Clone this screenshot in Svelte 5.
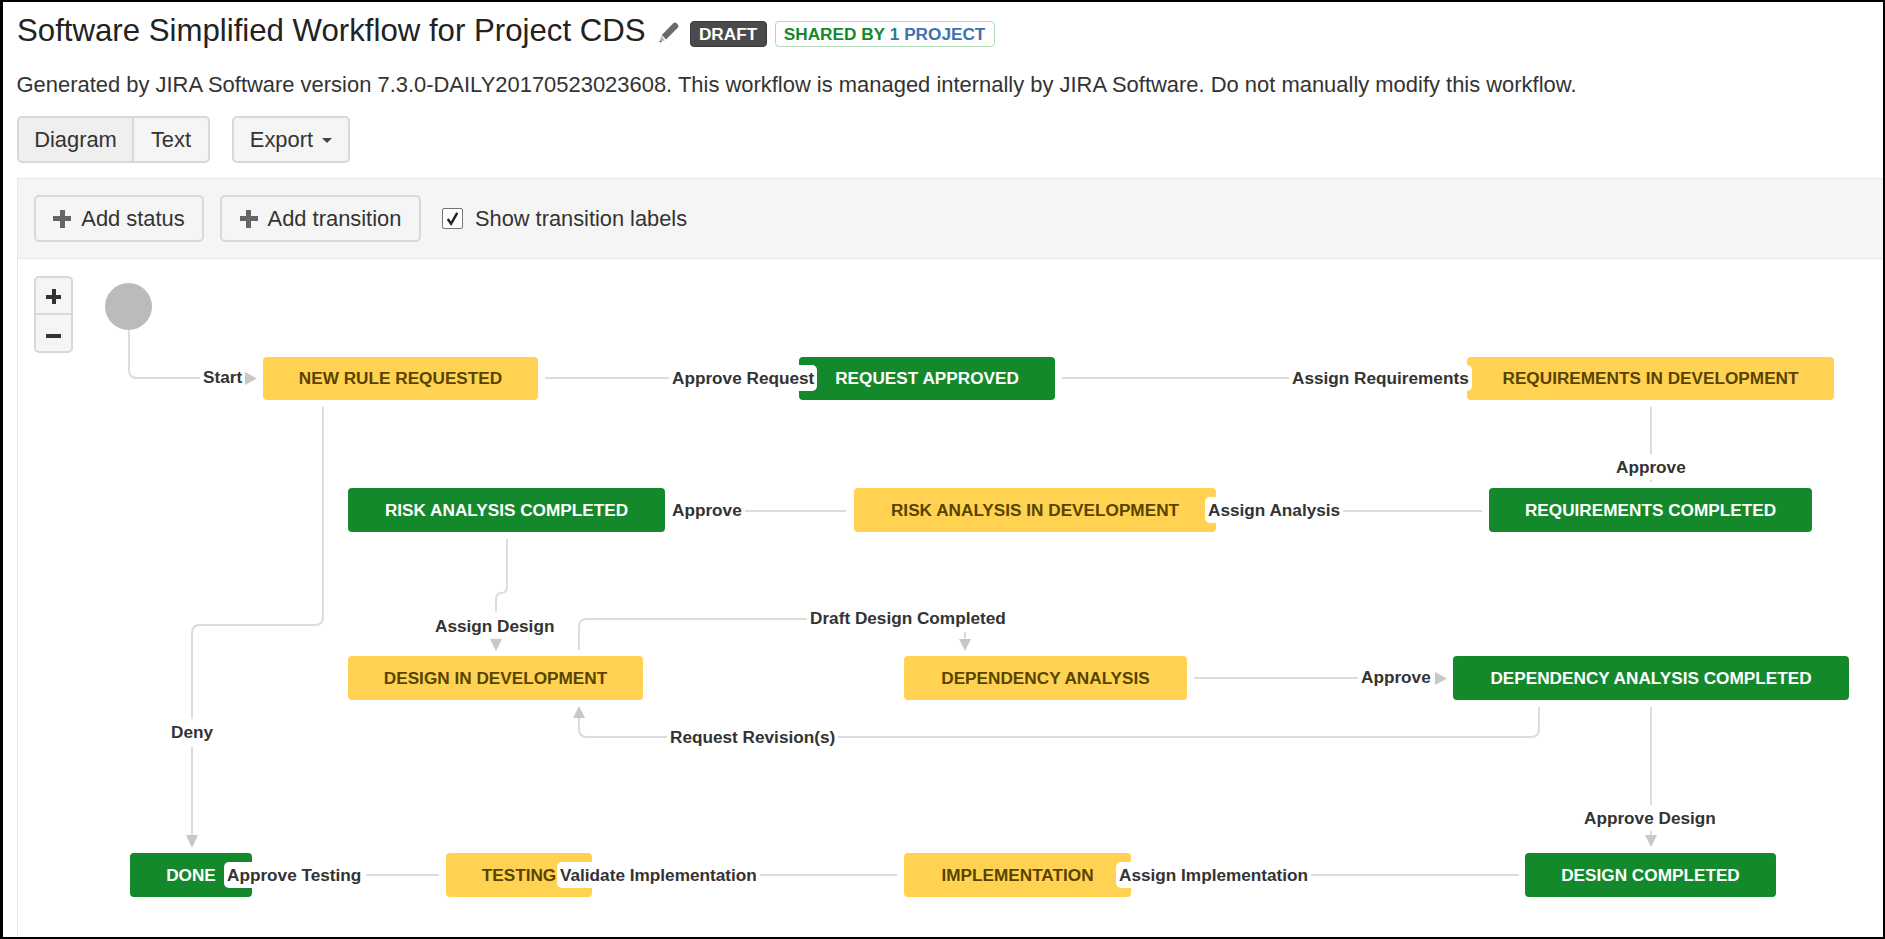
<script>
  // canvas origin in page coordinates, diagram data below is written in page coordinates
  const ox = 18;
  const oy = 259;

  const nodes = [
    { name: 'NEW RULE REQUESTED', x: 263, y: 357, w: 275, h: 43 },
    { name: 'REQUEST APPROVED', x: 799, y: 357, w: 256, h: 43, done: true },
    { name: 'REQUIREMENTS IN DEVELOPMENT', x: 1467, y: 357, w: 367, h: 43 },
    { name: 'RISK ANALYSIS COMPLETED', x: 348, y: 488, w: 317, h: 44, done: true },
    { name: 'RISK ANALYSIS IN DEVELOPMENT', x: 854, y: 488, w: 362, h: 44 },
    { name: 'REQUIREMENTS COMPLETED', x: 1489, y: 488, w: 323, h: 44, done: true },
    { name: 'DESIGN IN DEVELOPMENT', x: 348, y: 656, w: 295, h: 44 },
    { name: 'DEPENDENCY ANALYSIS', x: 904, y: 656, w: 283, h: 44 },
    { name: 'DEPENDENCY ANALYSIS COMPLETED', x: 1453, y: 656, w: 396, h: 44, done: true },
    { name: 'DONE', x: 130, y: 853, w: 122, h: 44, done: true },
    { name: 'TESTING', x: 446, y: 853, w: 146, h: 44 },
    { name: 'IMPLEMENTATION', x: 904, y: 853, w: 227, h: 44 },
    { name: 'DESIGN COMPLETED', x: 1525, y: 853, w: 251, h: 44, done: true }
  ];

  // x is where the text starts, cy its vertical middle
  const labels = [
    { text: 'Start', x: 203, cy: 377 },
    { text: 'Approve Request', x: 672, cy: 378 },
    { text: 'Assign Requirements', x: 1292, cy: 378 },
    { text: 'Approve', x: 1616, cy: 467 },
    { text: 'Approve', x: 672, cy: 510 },
    { text: 'Assign Analysis', x: 1208, cy: 510 },
    { text: 'Assign Design', x: 435, cy: 626 },
    { text: 'Draft Design Completed', x: 810, cy: 618 },
    { text: 'Request Revision(s)', x: 670, cy: 737 },
    { text: 'Approve', x: 1361, cy: 677 },
    { text: 'Approve Design', x: 1584, cy: 818 },
    { text: 'Deny', x: 171, cy: 732 },
    { text: 'Approve Testing', x: 227, cy: 875 },
    { text: 'Validate Implementation', x: 560, cy: 875 },
    { text: 'Assign Implementation', x: 1119, cy: 875 }
  ];

  const edges = [
    'M129 330V370Q129 378 137 378H203',
    'M545 378H672',
    'M1062 378H1292',
    'M1651 407V454',
    'M1651 480V482',
    'M741 511H846',
    'M1339 511H1482',
    'M507 539V586Q507 593 501 593Q496 593 496 600V612',
    'M579 650V627Q579 619 587 619H810',
    'M965 632V640',
    'M579 716V729Q579 737 587 737H670',
    'M835 737H1531Q1539 737 1539 729V707',
    'M1194 678H1361',
    'M1651 707V805',
    'M1651 826V836',
    'M1311 875H1519',
    'M760 875H897',
    'M366 875H439',
    'M323 407V617Q323 625 315 625H200Q192 625 192 633V719',
    'M192 747V836'
  ];

  const arrows = [
    '245,372 257,378.5 245,385',
    '1435,672 1447,678.5 1435,685',
    '490,639 502,639 496,651',
    '959,639 971,639 965,651',
    '1645,835 1657,835 1651,847',
    '186,835 198,835 192,848',
    '573,718 585,718 579,706'
  ];
</script>

<div class="page">
  <header class="title-row">
    <h1>Software Simplified Workflow for Project CDS</h1>
    <svg class="pencil" viewBox="0 0 20 21" width="20" height="21">
      <path d="M14.5 1 Q16 0 17.5 1.2 L19 2.8 Q20 4.2 19 5.5 L7 17.5 L2.8 13 Z" fill="#6a6a6a" />
      <path d="M2.2 14 L6 18.2 L0.5 20.5 Z" fill="#b5b5b5" />
      <path d="M0.5 20.5 L1 18.4 L2.6 19.8 Z" fill="#333" />
    </svg>
    <span class="badge draft">DRAFT</span>
    <span class="badge shared"><b class="green">SHARED BY</b> <b class="one">1</b> <b class="blue">PROJECT</b></span>
  </header>

  <p class="desc">Generated by JIRA Software version 7.3.0-DAILY20170523023608. This workflow is managed internally by JIRA Software. Do not manually modify this workflow.</p>

  <div class="view-row">
    <div class="btn-group">
      <button class="btn active">Diagram</button>
      <button class="btn">Text</button>
    </div>
    <button class="btn export">Export <i class="caret"></i></button>
  </div>

  <div class="panel">
    <div class="toolbar">
      <button class="btn add"><span class="plus"></span>Add status</button>
      <button class="btn add"><span class="plus"></span>Add transition</button>
      <label class="show">
        <span class="check">
          <svg viewBox="0 0 20 20" width="20" height="20"><path d="M5 10 L8.5 15 L15 3.5" fill="none" stroke="#222" stroke-width="2.6" /></svg>
        </span>
        Show transition labels
      </label>
    </div>

    <div class="canvas">
      <svg class="edges" viewBox="{ox} {oy} 1865 678" width="1865" height="678">
        {#each edges as d}
          <path {d} />
        {/each}
        {#each arrows as points}
          <polygon {points} />
        {/each}
      </svg>

      <div class="zoom">
        <span class="plus dark"></span>
        <span class="minus"></span>
      </div>
      <div class="start"></div>

      {#each nodes as n}
        <div class="node" class:done={n.done} style="left: {n.x - ox}px; top: {n.y - oy}px; width: {n.w}px; height: {n.h}px">{n.name}</div>
      {/each}

      {#each labels as l}
        <div class="label" style="left: {l.x - 3 - ox}px; top: {l.cy - 13 - oy}px">{l.text}</div>
      {/each}
    </div>
  </div>
</div>

<style>
  :global(body) {
    margin: 0;
    background: #fff;
  }

  .page {
    box-sizing: border-box;
    width: 1885px;
    height: 939px;
    border: 2px solid #000;
    border-left-width: 3px;
    overflow: hidden;
    font-family: "Liberation Sans", Arial, sans-serif;
    color: #333;
  }

  .title-row {
    display: flex;
    align-items: center;
    height: 45px;
    padding-left: 14px;
    padding-top: 13px;
    box-sizing: border-box;
  }

  h1 {
    margin: 0;
    font-size: 31.2px;
    font-weight: 400;
    color: #222;
    white-space: nowrap;
  }

  .pencil {
    margin-top: 3px;
    margin-left: 13px;
    margin-right: 11px;
  }

  .badge {
    box-sizing: border-box;
    height: 26px;
    margin-top: 6px;
    line-height: 26px;
    border-radius: 4px;
    font-size: 17.2px;
    font-weight: 700;
    text-align: center;
    white-space: nowrap;
  }

  .draft {
    width: 77px;
    background: #4a4a4a;
    border: 1px solid #3a3a3a;
    line-height: 24px;
    color: #fff;
  }

  .shared {
    width: 220px;
    margin-left: 8px;
    line-height: 24px;
    background: #fff;
    border: 1px solid #b2d8b9;
  }

  .green { color: #14892c; }
  .one { color: #2c7d8f; }
  .blue { color: #3b73af; }

  .desc {
    margin: 0;
    padding: 28px 0 0 13.5px;
    font-size: 21.94px;
    line-height: 20px;
    color: #333;
    white-space: nowrap;
  }

  .view-row {
    display: flex;
    gap: 22px;
    padding: 21px 0 0 14px;
    height: 47px;
  }

  .btn-group {
    display: flex;
  }

  .btn {
    box-sizing: border-box;
    height: 47px;
    padding: 0;
    font: 400 21.9px "Liberation Sans", Arial, sans-serif;
    color: #333;
    background: #f5f5f5;
    border: 2px solid #d8d8d8;
    border-radius: 5px;
  }

  .btn-group .btn {
    width: 78px;
    border-radius: 0 5px 5px 0;
    margin-left: -2px;
  }

  .btn-group .active {
    width: 117px;
    margin-left: 0;
    background: #efefef;
    border-radius: 5px 0 0 5px;
  }

  .export {
    width: 118px;
  }

  .caret {
    display: inline-block;
    width: 0;
    height: 0;
    margin-left: 3px;
    vertical-align: middle;
    border-left: 5.5px solid transparent;
    border-right: 5.5px solid transparent;
    border-top: 5.5px solid #444;
  }

  .panel {
    margin: 15px 0 0 14px;
    border-left: 1px solid #e8e8e8;
  }

  .toolbar {
    box-sizing: border-box;
    display: flex;
    align-items: center;
    gap: 16px;
    height: 81px;
    padding-left: 16px;
    background: #f5f5f5;
    border-top: 1px solid #e9e9e9;
    border-bottom: 1px solid #e9e9e9;
  }

  .add {
    display: flex;
    align-items: center;
    justify-content: center;
    height: 47px;
    background: #f5f5f5;
  }

  .add:first-child { width: 170px; }
  .add:nth-child(2) { width: 201px; }

  .plus {
    position: relative;
    display: inline-block;
    width: 18px;
    height: 18px;
    margin-right: 10px;
  }

  .plus::before,
  .plus::after {
    content: '';
    position: absolute;
    background: #666;
  }

  .plus::before {
    left: 0;
    right: 0;
    top: 6.5px;
    height: 5px;
  }

  .plus::after {
    top: 0;
    bottom: 0;
    left: 6.5px;
    width: 5px;
  }

  .show {
    display: flex;
    align-items: center;
    gap: 12px;
    margin-left: 5px;
    font-size: 21.8px;
    color: #333;
  }

  .check {
    box-sizing: border-box;
    display: flex;
    width: 21px;
    height: 21px;
    background: #fff;
    border: 1px solid #767676;
    border-radius: 2px;
    align-items: center;
    justify-content: center;
  }

  .canvas {
    position: relative;
    height: 678px;
  }

  .edges {
    position: absolute;
    left: 0;
    top: 0;
  }

  .edges path {
    fill: none;
    stroke: #dcdcdc;
    stroke-width: 2;
  }

  .edges polygon {
    fill: #c8c8c8;
  }

  .zoom {
    position: absolute;
    left: 16px;
    top: 17px;
    box-sizing: border-box;
    width: 39px;
    height: 77px;
    display: flex;
    flex-direction: column;
    background: #f5f5f5;
    border: 2px solid #d8d8d8;
    border-radius: 5px;
  }

  .zoom .plus {
    width: 15px;
    height: 15px;
    margin: 11px auto 0;
  }

  .zoom .plus::before,
  .zoom .plus::after {
    background: #333;
  }

  .zoom .plus::before {
    top: 5.5px;
    height: 4px;
  }

  .zoom .plus::after {
    left: 5.5px;
    width: 4px;
  }

  .minus {
    display: block;
    width: 15px;
    height: 4px;
    margin: 30px auto 0;
    background: #333;
  }

  .zoom::after {
    content: '';
    position: absolute;
    left: 0;
    right: 0;
    top: 35px;
    height: 2px;
    background: #d8d8d8;
  }

  .start {
    position: absolute;
    left: 87px;
    top: 24px;
    width: 47px;
    height: 47px;
    border-radius: 50%;
    background: #bbb;
  }

  .node {
    position: absolute;
    box-sizing: border-box;
    display: flex;
    align-items: center;
    justify-content: center;
    background: #ffd351;
    color: #594300;
    border-radius: 4px;
    font-size: 17.2px;
    font-weight: 700;
    white-space: nowrap;
  }

  .node.done {
    background: #14892c;
    color: #fff;
  }

  .label {
    position: absolute;
    height: 26px;
    line-height: 26px;
    padding: 0 3px;
    background: #fff;
    border-radius: 5px;
    color: #333;
    font-size: 17.2px;
    font-weight: 700;
    white-space: nowrap;
  }
</style>
